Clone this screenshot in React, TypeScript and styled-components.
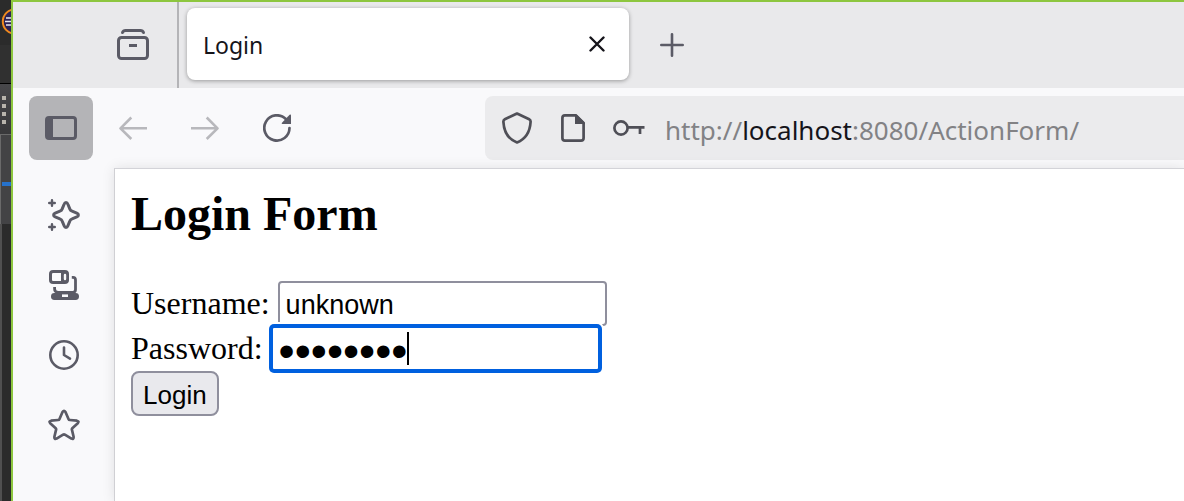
import React, { useState } from "react";
import styled, { createGlobalStyle } from "styled-components";

const ink = "#5b5b66";
const uiFont = `"Noto Sans", "Open Sans", sans-serif`;

const GlobalStyle = createGlobalStyle`
  *, *::before, *::after { box-sizing: border-box; }
  body { margin: 0; background: #2b2b2b; overflow: hidden; }
  button { padding: 0; border: 0; background: none; font: inherit; color: inherit; }
  svg { display: block; }
`;

const Desktop = styled.div`
  display: flex;
  min-height: 100vh;
`;

/* Editor window that peeks out behind the browser */
const EditorStrip = styled.div`
  display: flex;
  flex-direction: column;
  flex: none;
  width: 11px;
  overflow: hidden;
  background: #2b2b2b;
`;

const EditorTitle = styled.div`
  height: 84px;
  padding-top: 8px;
  border-bottom: 1px solid #000;
  background: linear-gradient(#2b2b2b 45px, #303030 45px);
`;

const EditorTools = styled.div`
  display: flex;
  flex-direction: column;
  gap: 4px;
  height: 50px;
  padding: 12px 0 0 2px;
  background: linear-gradient(#47474a, #39393b);
`;

const GripDot = styled.i`
  width: 4px;
  height: 4px;
  background: #b8b4ac;
`;

const EditorPane = styled.div`
  height: 90px;
  padding-top: 47px;
  border-top: 1px solid #6a6a6a;
  border-left: 1px solid #6a6a6a;
  background: #434345;
`;

const EditorAccent = styled.div`
  height: 4px;
  margin-left: 1px;
  background: #2672cc;
`;

const EditorBody = styled.div`
  flex: 1;
  border-left: 2px solid #505050;
`;

const Browser = styled.div`
  display: flex;
  flex-direction: column;
  flex: 1;
  min-width: 0;
  border-top: 2px solid #8dc63f;
  border-left: 2px solid #8dc63f;
  background: #f9f9fb;
  color: ${ink};
  font-family: ${uiFont};
`;

const TabStrip = styled.div`
  display: flex;
  align-items: center;
  height: 86px;
  background: #e9e9eb;
`;

const ViewArea = styled.div`
  display: flex;
  align-items: center;
  justify-content: flex-end;
  align-self: stretch;
  width: 166px;
  padding-right: 12px;
  border-right: 2px solid #b4b4b7;
`;

const IconButton = styled.button<{ $active?: boolean; $faded?: boolean }>`
  display: flex;
  align-items: center;
  justify-content: center;
  flex: none;
  width: 64px;
  height: 64px;
  border-radius: 8px;
  background: ${(p) => (p.$active ? "#b4b4b7" : "transparent")};
  color: ${(p) => (p.$faded ? "#b8b8bc" : ink)};
`;

const Tab = styled.div`
  display: flex;
  align-items: center;
  justify-content: space-between;
  align-self: flex-start;
  flex: 0 1 442px;
  height: 72px;
  margin: 6px 11px 0 8px;
  padding: 0 8px 0 16px;
  border-radius: 8px;
  background: #fff;
  box-shadow: 0 1px 4px rgba(0, 0, 0, 0.35);
  color: #15141a;
  font-size: 23px;
  line-height: 32px;
`;

const TabTitle = styled.span`
  padding-top: 2px;
`;

const CloseButton = styled(IconButton)`
  width: 48px;
  height: 48px;
  color: #15141a;
`;

const Toolbar = styled.div`
  display: flex;
  align-items: center;
  gap: 8px;
  height: 80px;
  padding-left: 16px;
`;

const AddressBar = styled.div`
  display: flex;
  align-items: center;
  flex: 1;
  min-width: 0;
  height: 64px;
  margin-left: 168px;
  padding-left: 4px;
  border-radius: 8px 0 0 8px;
  background: #ebebed;
`;

const AddressButton = styled(IconButton)`
  width: 56px;
  color: #4f4f57;
`;

const Address = styled.div`
  flex: 1;
  padding: 4px 0 0 8px;
  overflow: hidden;
  color: #828285;
  font-size: 26px;
  line-height: 36px;
  white-space: nowrap;
  outline: none;
`;

const Host = styled.span`
  color: #15141a;
`;

const Body = styled.div`
  display: flex;
  flex: 1;
`;

const Sidebar = styled.nav`
  display: flex;
  flex-direction: column;
  align-items: center;
  gap: 6px;
  flex: none;
  width: 101px;
  padding-top: 15px;
`;

const Page = styled.main`
  flex: 1;
  padding: 17px 16px;
  border-top: 1px solid #d3d3d8;
  border-left: 1px solid #d0d0d4;
  background: #fff;
  box-shadow: 0 0 12px rgba(0, 0, 0, 0.1);
  color: #000;
  font-family: "Liberation Serif", serif;
  font-size: 32px;
`;

const Title = styled.h2`
  margin: 0 0 39px;
  font-size: 48px;
  line-height: 56px;
`;

const Field = styled.div`
  position: relative;
  display: flex;
  align-items: center;
  gap: 8px;
`;

const TextInput = styled.input`
  width: 329px;
  height: 45px;
  padding: 4px 6px 0;
  border: 2px solid #8f8f9d;
  border-radius: 4px;
  outline: none;
  background: #fff;
  color: #000;
  font-family: "Liberation Sans", sans-serif;
  font-size: 27px;
`;

const PasswordInput = styled(TextInput)`
  padding: 4px 6px 0;
  border-color: #0060df;
  border-radius: 3px;
  box-shadow: 0 0 0 2px #0060df, 0 0 0 4px #fff;
  font-size: 46px;
  caret-color: transparent;
`;

const PasswordBox = styled.div`
  position: relative;
  display: flex;
`;

const Caret = styled.i`
  position: absolute;
  top: 6px;
  left: 136px;
  width: 2px;
  height: 33px;
  background: #000;
`;

const SubmitButton = styled.button`
  display: block;
  height: 45px;
  padding: 4px 10px 0;
  border: 2px solid #8f8f9d;
  border-radius: 8px;
  background: #e9e9ed;
  color: #000;
  font-family: "Liberation Sans", sans-serif;
  font-size: 26px;
`;

type IconProps = { w: number; h: number; stroke?: number; children: React.ReactNode };

function Icon({ w, h, stroke = 3, children }: IconProps) {
  return (
    <svg
      width={w}
      height={h}
      viewBox={`0 0 ${w} ${h}`}
      fill="none"
      stroke="currentColor"
      strokeWidth={stroke}
      strokeLinecap="round"
      strokeLinejoin="round"
      aria-hidden="true"
    >
      {children}
    </svg>
  );
}

export default function App() {
  const [username, setUsername] = useState("unknown");
  const [password, setPassword] = useState("password");

  return (
    <>
      <GlobalStyle />
      <Desktop>
        <EditorStrip>
          <EditorTitle>
            <svg width="11" height="28" viewBox="0 0 11 28" aria-hidden="true">
              <circle cx="15" cy="13.5" r="12.2" fill="#2c2255" stroke="#f08a1d" strokeWidth="2" />
              <path d="M6 10H11M5 13.5H11M6 17H11" stroke="#e8e6ee" strokeWidth="1.6" />
            </svg>
          </EditorTitle>
          <EditorTools>
            <GripDot />
            <GripDot />
            <GripDot />
            <GripDot />
          </EditorTools>
          <EditorPane>
            <EditorAccent />
          </EditorPane>
          <EditorBody />
        </EditorStrip>

        <Browser>
          <TabStrip>
            <ViewArea>
              <IconButton aria-label="View">
                <Icon w={32} h={32}>
                  <rect x="1.5" y="8.5" width="29" height="21" rx="3" />
                  <path d="M5.5 3.5Q6.3 1.5 8.5 1.5H23.5Q25.7 1.5 26.5 3.5" />
                  <path d="M12 16.5H20" strokeLinecap="butt" />
                </Icon>
              </IconButton>
            </ViewArea>
            <Tab>
              <TabTitle>Login</TabTitle>
              <CloseButton aria-label="Close tab">
                <Icon w={16} h={16} stroke={2.4}>
                  <path d="M1.5 1.5L14.5 14.5M14.5 1.5L1.5 14.5" />
                </Icon>
              </CloseButton>
            </Tab>
            <IconButton aria-label="New tab">
              <Icon w={24} h={24} stroke={2.6}>
                <path d="M12 1.3V22.7M1.3 12H22.7" />
              </Icon>
            </IconButton>
          </TabStrip>

          <Toolbar>
            <IconButton $active aria-label="Toggle sidebar">
              <Icon w={32} h={24}>
                <rect x="1.5" y="1.5" width="29" height="21" rx="2.5" />
                <path d="M3 2H8V22H3Z" fill="currentColor" stroke="none" />
              </Icon>
            </IconButton>
            <IconButton $faded aria-label="Back">
              <Icon w={28} h={24} stroke={2.6}>
                <path d="M12.3 1.5L1.5 12.3L12.3 23M1.5 12.3H28" strokeLinecap="butt" />
              </Icon>
            </IconButton>
            <IconButton $faded aria-label="Forward">
              <Icon w={28} h={24} stroke={2.6}>
                <path d="M15.7 1.5L26.5 12.3L15.7 23M26.5 12.3H0" strokeLinecap="butt" />
              </Icon>
            </IconButton>
            <IconButton aria-label="Reload">
              <Icon w={28} h={28} stroke={2.7}>
                <path d="M22.8 5A12.6 12.6 0 1 0 26.5 14" />
                <path d="M28 1.2V10H19.4Q18.2 9.8 19 8.8L26.6 .8Q28 -.2 28 1.2Z" fill="currentColor" stroke="none" />
              </Icon>
            </IconButton>
            <AddressBar>
              <AddressButton aria-label="Tracking protection">
                <Icon w={30} h={32} stroke={2.7}>
                  <path d="M15 1.5L27.2 7.3Q28.7 8 28.6 9.8C28 20 24 27 15 30.5C6 27 2 20 1.4 9.8Q1.3 8 2.8 7.3Z" />
                </Icon>
              </AddressButton>
              <AddressButton aria-label="Page information">
                <Icon w={24} h={28} stroke={2.7}>
                  <path d="M15 1.4H4Q1.4 1.4 1.4 4V24Q1.4 26.6 4 26.6H20Q22.6 26.6 22.6 24V9Z" />
                  <path d="M14 .5H15.5L24 9V10H14Z" fill="currentColor" stroke="none" />
                </Icon>
              </AddressButton>
              <AddressButton aria-label="Saved passwords">
                <Icon w={32} h={16} stroke={2.7}>
                  <circle cx="8" cy="8" r="6.6" />
                  <path d="M15 7.3H31.5M27 7.3V14" strokeLinecap="butt" />
                </Icon>
              </AddressButton>
              <Address role="textbox" aria-label="Address" tabIndex={0}>
                http://<Host>localhost</Host>:8080/ActionForm/
              </Address>
            </AddressBar>
          </Toolbar>

          <Body>
            <Sidebar>
              <IconButton aria-label="Assistant">
                <Icon w={32} h={32}>
                  <path d="M18 3.6Q19.3 3.6 19.9 5.2L21.8 9.9Q22.4 11.6 24.1 12.2L28.8 14.1Q30.4 14.8 30.4 16Q30.4 17.2 28.8 17.9L24.1 19.8Q22.4 20.4 21.8 22.1L19.9 26.8Q19.3 28.4 18 28.4Q16.7 28.4 16.1 26.8L14.2 22.1Q13.6 20.4 11.9 19.8L7.2 17.9Q5.6 17.2 5.6 16Q5.6 14.8 7.2 14.1L11.9 12.2Q13.6 11.6 14.2 9.9L16.1 5.2Q16.7 3.6 18 3.6Z" />
                  <path d="M4 1.2V6.8M1.2 4H6.8M4 25.2V30.8M1.2 28H6.8" strokeWidth="2.4" />
                </Icon>
              </IconButton>
              <IconButton aria-label="Synced tabs">
                <Icon w={30} h={30}>
                  <rect x="1.5" y="1.5" width="17" height="11" rx="2.6" />
                  <path d="M12 1.5H17Q19.5 2 19.5 4V10Q19.5 12 17 12.5H12Z" fill="currentColor" stroke="none" />
                  <path d="M16 5V9" stroke="#f9f9fb" strokeWidth="2.4" />
                  <path d="M22.8 7.4H24Q26.5 7.4 26.5 10V19.5Q26.5 22 24 22.5H9Q5.6 22 5.6 19V17" strokeWidth="2.8" strokeLinecap="butt" />
                  <rect x="2" y="23" width="28" height="7" rx="3.4" fill="currentColor" stroke="none" />
                  <path d="M13 25.7H19" stroke="#f9f9fb" strokeWidth="2.6" strokeLinecap="butt" />
                </Icon>
              </IconButton>
              <IconButton aria-label="History">
                <Icon w={30} h={30} stroke={2.6}>
                  <circle cx="15" cy="15" r="13.7" />
                  <path d="M15 7.5V15L21 18.6" />
                </Icon>
              </IconButton>
              <IconButton aria-label="Bookmarks">
                <Icon w={32} h={32} stroke={2.7}>
                  <path d="M14.5 3Q16 .8 17.5 3L20.6 10.2Q20.9 11 21.8 11L28.9 11.7Q31.4 12.2 29.8 14.2L24.3 19.2Q23.7 19.8 23.9 20.6L25.6 27.8Q25.8 30.5 23.4 29.6L16.9 25.7Q16 25.2 15.1 25.7L8.6 29.6Q6.2 30.5 6.4 27.8L8.1 20.6Q8.3 19.8 7.7 19.2L2.2 14.2Q.6 12.2 3.1 11.7L10.2 11Q11.1 11 11.4 10.2Z" />
                </Icon>
              </IconButton>
            </Sidebar>

            <Page>
              <Title>Login Form</Title>
              <form onSubmit={(e) => e.preventDefault()}>
                <Field>
                  <label htmlFor="username">Username:</label>
                  <TextInput
                    id="username"
                    type="text"
                    value={username}
                    onChange={(e) => setUsername(e.target.value)}
                  />
                </Field>
                <Field>
                  <label htmlFor="password">Password:</label>
                  <PasswordBox>
                    <PasswordInput
                      id="password"
                      type="password"
                      value={password}
                      onChange={(e) => setPassword(e.target.value)}
                    />
                    <Caret />
                  </PasswordBox>
                </Field>
                <SubmitButton type="submit">Login</SubmitButton>
              </form>
            </Page>
          </Body>
        </Browser>
      </Desktop>
    </>
  );
}
